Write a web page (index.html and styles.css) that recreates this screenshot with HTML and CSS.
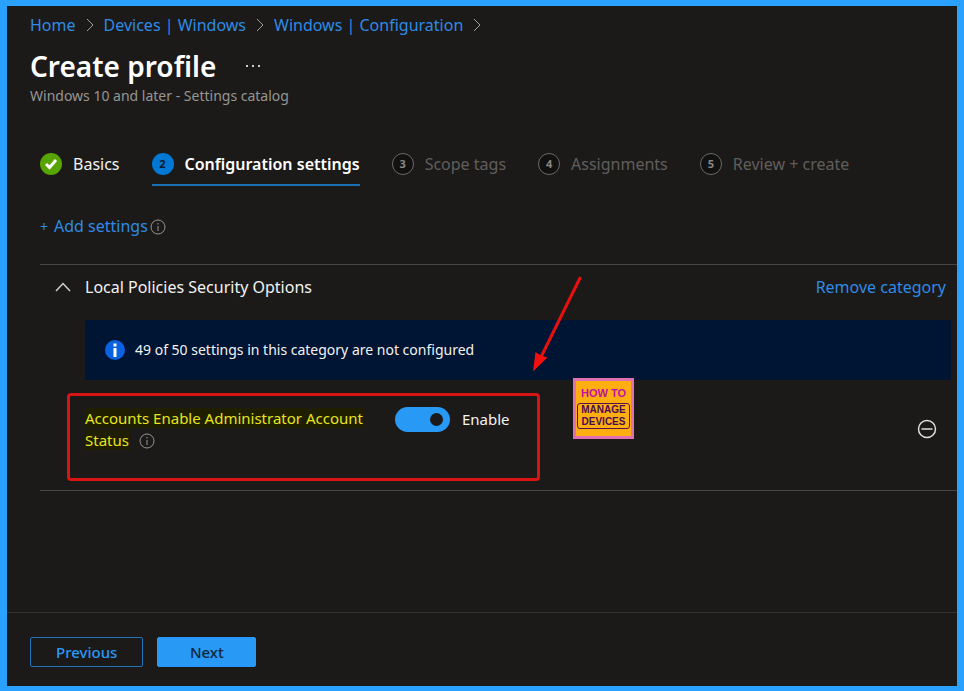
FILE: index.html
```html
<!DOCTYPE html>
<html lang="en">
<head>
    <meta charset="UTF-8">
    <meta name="viewport" content="width=device-width, initial-scale=1">
    <title>Create profile</title>
    <link rel="stylesheet" href="styles.css">
</head>
<body>
<header class="header">
    <nav class="breadcrumb" aria-label="Breadcrumb">
        <a href="#">Home</a>
        <svg class="sep" viewBox="0 0 8 14"><path d="M1 1l6 6-6 6"/></svg>
        <a href="#">Devices | Windows</a>
        <svg class="sep" viewBox="0 0 8 14"><path d="M1 1l6 6-6 6"/></svg>
        <a href="#">Windows | Configuration</a>
        <svg class="sep" viewBox="0 0 8 14"><path d="M1 1l6 6-6 6"/></svg>
    </nav>
    <div class="title-row">
        <h1>Create profile</h1>
        <button class="more" aria-label="More">
            <svg width="14" height="2" viewBox="0 0 14 2"><path d="M0 0h2v2H0zM6 0h2v2H6zM12 0h2v2h-2z"/></svg>
        </button>
    </div>
    <p class="subtitle">Windows 10 and later - Settings catalog</p>
</header>

<main class="content">
    <nav class="steps" aria-label="Steps">
        <a class="step done" href="#">
            <span class="dot"><svg width="14" height="12" viewBox="0 0 14 12"><path d="M2 6l3.500 3.500L12 2"/></svg></span>
            Basics
        </a>
        <a class="step active" href="#"><span class="dot">2</span>Configuration settings</a>
        <a class="step" href="#"><span class="dot">3</span>Scope tags</a>
        <a class="step" href="#"><span class="dot">4</span>Assignments</a>
        <a class="step" href="#"><span class="dot">5</span>Review + create</a>
    </nav>

    <div class="add">
        <a href="#"><span class="plus">+</span>Add settings</a>
        <svg class="info" viewBox="0 0 16 16"><circle cx="8" cy="8" r="7"/><path d="M8 7v5M8 4v1.500"/></svg>
    </div>

    <section class="category">
        <div class="category-head">
            <button class="collapse" aria-label="Collapse">
                <svg width="16" height="10" viewBox="0 0 16 10"><path d="M1 9l7-7.500L15 9"/></svg>
            </button>
            <h2>Local Policies Security Options</h2>
            <a href="#">Remove category</a>
        </div>
        <div class="banner">
            <svg width="20" height="20" viewBox="0 0 20 20">
                <circle cx="10" cy="10" r="10" fill="#0b62e0"/>
                <path d="M8.500 3.500h3v3h-3zM8.500 8h3v9h-3z" fill="#fff"/>
            </svg>
            <span>49 of 50 settings in this category are not configured</span>
        </div>
        <div class="setting">
            <label class="name" for="admin-status"><span class="mark">Accounts Enable Administrator Account Status</span>
                <svg class="info" viewBox="0 0 16 16"><circle cx="8" cy="8" r="7"/><path d="M8 7v5M8 4v1.500"/></svg>
            </label>
            <input type="checkbox" role="switch" class="toggle" id="admin-status" checked>
            <label class="state" for="admin-status">Enable</label>
            <button class="remove" aria-label="Remove setting">
                <svg width="20" height="20" viewBox="0 0 20 20"><circle cx="10" cy="10" r="8.500"/><path d="M4.500 10h11"/></svg>
            </button>
            <div class="outline"></div>
            <svg class="arrow" width="52" height="98" viewBox="0 0 52 98">
                <path d="M48.500 1L9 81" stroke="#e8100f" stroke-width="3"/>
                <path d="M1 95.500L3.500 76 9 79.500 15.500 81.500z" fill="#f40f0f"/>
            </svg>
            <div class="logo">
                <span class="logo-top">HOW TO</span>
                <span class="logo-box">MANAGE DEVICES</span>
            </div>
        </div>
    </section>
</main>

<footer class="footer">
    <button class="btn">Previous</button>
    <button class="btn primary">Next</button>
</footer>
</body>
</html>
```
FILE: styles.css
```css
* {
    box-sizing: border-box;
}

body {
    margin: 0;
    min-height: 100vh;
    display: flex;
    flex-direction: column;
    border: solid #2ba1ff;
    border-width: 6px 7px 5px;
    background: #1b1a19;
    color: #f3f2f1;
    font: 16px/24px "Noto Sans", "Open Sans", sans-serif;
}

a {
    color: #2f8ae5;
    text-decoration: none;
}

button {
    padding: 0;
    border: 0;
    background: none;
    color: inherit;
    font: inherit;
    cursor: pointer;
}

svg {
    display: block;
    flex: none;
    fill: none;
}

.header {
    padding: 7px 23px 0;
}

.breadcrumb {
    display: flex;
    align-items: center;
    gap: 10px;
}

.sep {
    width: 8px;
    height: 14px;
    stroke: #a19f9d;
}

.title-row {
    display: flex;
    align-items: center;
    gap: 30px;
    margin-top: 11px;
}

h1 {
    margin: 0;
    font-size: 28px;
    font-weight: 600;
    line-height: 36px;
    color: #fff;
}

.more svg {
    fill: #d0cecc;
}

.subtitle {
    margin: 0;
    font-size: 14px;
    line-height: 24px;
    color: #979593;
}

.content {
    flex: 1;
    padding: 40px 0 40px 33px;
}

.steps {
    display: flex;
    gap: 32px;
}

.step {
    display: flex;
    align-items: center;
    gap: 11px;
    padding-bottom: 4px;
    border-bottom: 2px solid transparent;
    line-height: 32px;
    color: #605e5c;
}

.dot {
    display: flex;
    align-items: center;
    justify-content: center;
    width: 22px;
    height: 22px;
    border: 1px solid #6b6967;
    border-radius: 50%;
    background: #111;
    color: #8a8886;
    font-size: 11px;
    font-weight: 700;
}

.done {
    color: #f3f2f1;
}

.done .dot {
    border: 0;
    background: #57a300;
}

.done svg {
    stroke: #fff;
    stroke-width: 3;
}

.active {
    border-color: #1a6fb5;
    color: #fff;
    font-weight: 600;
}

.active .dot {
    border: 0;
    background: #0078d4;
    color: #0b1a2a;
}

.add {
    display: flex;
    align-items: center;
    gap: 2px;
    margin: 28px 0 25px;
}

.plus {
    margin-right: 6px;
    font-size: 14px;
}

.info {
    width: 16px;
    height: 16px;
    stroke: #979593;
}

.category {
    border-top: 1px solid #484644;
    border-bottom: 1px solid #484644;
    padding: 10px 6px 0 45px;
}

.category-head {
    display: flex;
    align-items: center;
    margin-left: -30px;
    padding-right: 5px;
}

.collapse {
    width: 30px;
}

.collapse svg {
    stroke: #d2d0ce;
    stroke-width: 1.5;
}

h2 {
    flex: 1;
    margin: 0;
    font-size: 16px;
    font-weight: 400;
}

.banner {
    display: flex;
    align-items: center;
    gap: 10px;
    margin-top: 21px;
    padding: 18px 20px;
    border-radius: 2px;
    background: #001433;
    font-size: 14px;
}

.setting {
    position: relative;
    display: flex;
    align-items: flex-start;
    gap: 12px;
    padding: 27px 14px 39px 0;
}

.name {
    width: 298px;
    font-size: 15px;
    line-height: 22px;
    color: #e6e51e;
}

.mark {
    background: #1f1e00;
}

.name .info {
    display: inline-block;
    margin-left: 6px;
    vertical-align: -3px;
}

.toggle {
    appearance: none;
    display: flex;
    align-items: center;
    justify-content: flex-start;
    width: 55px;
    height: 25px;
    margin: 0;
    padding: 0 7px;
    border-radius: 13px;
    background: #2899f5;
}

.toggle::before {
    content: "";
    width: 13px;
    height: 13px;
    border-radius: 50%;
    background: #1b1a19;
}

.toggle:checked {
    justify-content: flex-end;
}

.state {
    flex: 1;
    font-size: 15px;
}

.remove {
    align-self: center;
}

.remove svg {
    stroke: #e1dfdd;
    stroke-width: 1.5;
}

/* annotations drawn over the page */
.outline {
    position: absolute;
    top: 13px;
    left: -18px;
    width: 473px;
    height: 88px;
    border: 3px solid #d91414;
    border-radius: 4px;
    pointer-events: none;
}

.arrow {
    position: absolute;
    top: -104px;
    left: 447px;
    pointer-events: none;
}

.logo {
    position: absolute;
    top: -2px;
    left: 488px;
    width: 61px;
    height: 61px;
    padding-top: 5px;
    border: 3px solid #e070b4;
    background: #ffae12;
    font-family: "Liberation Sans", sans-serif;
    font-weight: 700;
    text-align: center;
}

.logo span {
    display: block;
}

.logo-top {
    margin-bottom: 3px;
    font-size: 11px;
    line-height: 14px;
    color: #c010a8;
}

.logo-box {
    margin: 0 1px;
    border: 1px solid #5c1048;
    border-radius: 3px;
    font-size: 10px;
    line-height: 12px;
    color: #4a0c50;
}

.footer {
    display: flex;
    gap: 14px;
    padding: 24px 23px 19px;
    border-top: 1px solid #323130;
}

.btn {
    min-width: 99px;
    height: 30px;
    padding: 0 25px;
    border: 1px solid #2472b8;
    border-radius: 2px;
    color: #2899f5;
    font-size: 15px;
    font-weight: 500;
}

.primary {
    border-color: #2899f5;
    background: #2899f5;
    color: #10263c;
}
```
